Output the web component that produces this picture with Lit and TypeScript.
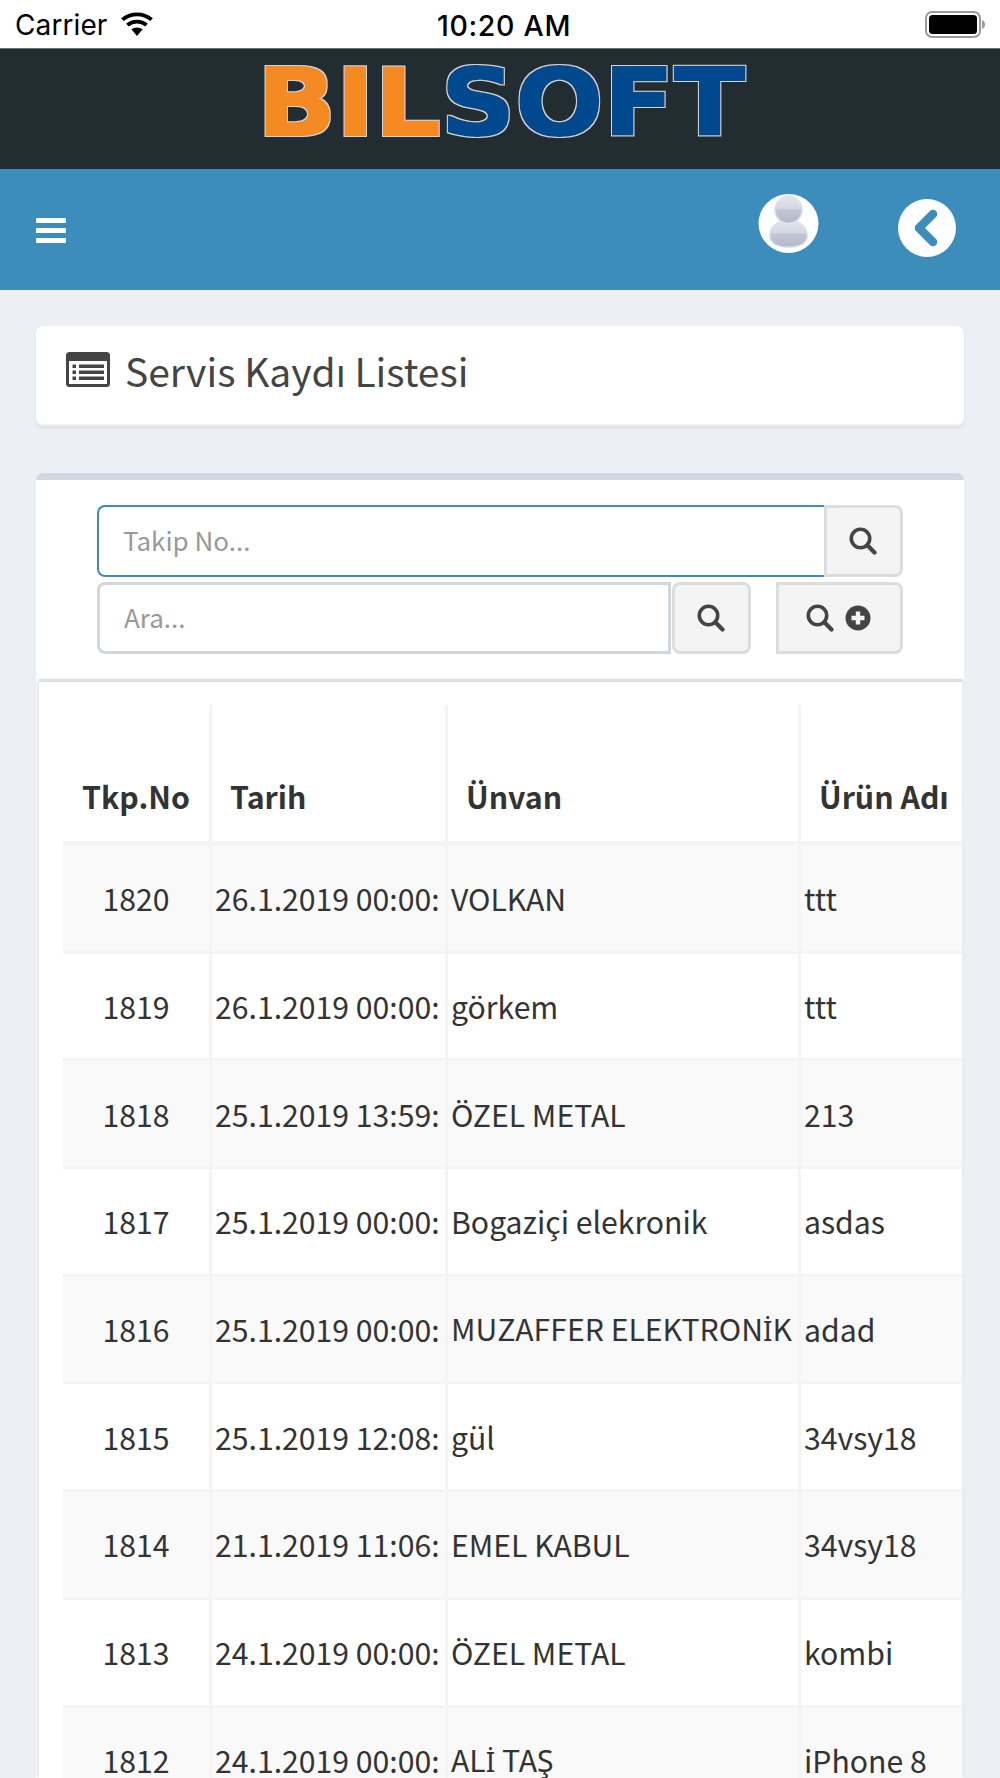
import { LitElement, html, css, svg } from "lit";
import { customElement } from "lit/decorators.js";

const dotI = html`<span class="idot">\u0130</span>`;

const rows: [string, string, unknown, string][] = [
  ["1820", "26.1.2019 00:00:", "VOLKAN", "ttt"],
  ["1819", "26.1.2019 00:00:", "görkem", "ttt"],
  ["1818", "25.1.2019 13:59:", "ÖZEL METAL", "213"],
  ["1817", "25.1.2019 00:00:", "Bogaziçi elekronik", "asdas"],
  ["1816", "25.1.2019 00:00:", html`MUZAFFER ELEKTRON${dotI}K`, "adad"],
  ["1815", "25.1.2019 12:08:", "gül", "34vsy18"],
  ["1814", "21.1.2019 11:06:", "EMEL KABUL", "34vsy18"],
  ["1813", "24.1.2019 00:00:", "ÖZEL METAL", "kombi"],
  ["1812", "24.1.2019 00:00:", html`AL${dotI} TAŞ`, "iPhone 8"],
];

const searchIcon = svg`<svg class="sr" width="28" height="28" viewBox="0 0 28 28" fill="none" stroke="#444"><circle cx="11.5" cy="11.5" r="9.2" stroke-width="3.6"/><path d="M18.6 18.6 L25.5 25.5" stroke-width="4.2" stroke-linecap="round"/></svg>`;

@customElement("app-root")
export class AppRoot extends LitElement {
  static styles = css`
    :host {
      display: block;
      width: 1000px;
      height: 1778px;
      overflow: hidden;
      background: #ecf0f5;
      font-family: "Noto Sans CJK JP", "Noto Sans", sans-serif;
      color: #333;
    }
    * { box-sizing: border-box; }
    .idot { font-family: "Noto Sans", sans-serif; font-size: 0.92em; }
    .status {
      height: 49px;
      background: #fff;
      border-bottom: 1px solid #6b7276;
      display: grid;
      grid-template-columns: 1fr auto 1fr;
      align-items: center;
      padding: 2px 15px 0 15px;
      font-family: Inter, "Liberation Sans", sans-serif;
      color: #000;
    }
    .st-left { display: flex; align-items: center; gap: 13px; font-size: 28px; letter-spacing: 0.1px; }
    .st-left svg { margin-top: -3px; }
    .st-right svg { margin-top: -2px; }
    .st-time { font-size: 28.5px; font-weight: 500; letter-spacing: 0.7px; padding-left: 8px; }
    .st-right { display: flex; justify-content: flex-end; }
    .logo-bar {
      height: 120px;
      background: #222d32;
      display: flex;
      justify-content: center;
    }
    .logo { display: block; margin-top: 8px; margin-left: 8px; overflow: visible; }
    .logo text {
      font-family: "DejaVu Sans", sans-serif;
      font-weight: 700;
      font-size: 93px;
    }
    .nav {
      height: 121px;
      background: #3c8dbc;
      display: flex;
      align-items: center;
      padding: 0 44px 0 36px;
    }
    .burger { width: 30px; display: flex; flex-direction: column; gap: 5px; margin-top: 1px; }
    .burger span { height: 5px; background: #fff; border-radius: 1px; }
    .spacer { flex: 1; }
    .avatar { width: 61px; height: 61px; margin-right: 79px; margin-top: -12px; display: block; }
    .back { width: 58px; height: 58px; display: block; margin-top: -3px; }
    .content { padding: 36px 36px 0; }
    .title-card {
      height: 100px;
      background: #fff;
      border-radius: 7px;
      border-bottom: 2px solid #f0f0f0;
      box-shadow: 0 2px 3px rgba(0, 0, 0, 0.08);
      display: flex;
      align-items: flex-start;
      padding: 21px 0 0 30px;
      gap: 15px;
      margin-bottom: 47px;
    }
    .title-card svg { margin-top: 5px; }
    .title {
      font-size: 39px;
      line-height: 46px;
      font-weight: 400;
      color: #444;
    }
    .box {
      background: #fff;
      border-top: 7px solid #d2d6de;
      border-radius: 7px 7px 0 0;
      padding-top: 25px;
    }
    .search { padding: 0 61px 25px; display: flex; flex-direction: column; gap: 5px; }
    .line { display: flex; height: 72px; }
    .input {
      flex: 1;
      min-width: 0;
      height: 72px;
      padding: 0 24px 3px;
      font: 400 26px "Noto Sans CJK JP", "Noto Sans", sans-serif;
      background: #fff;
      outline: none;
      border: 3px solid #d2d6de;
      border-radius: 8px 0 0 8px;
    }
    .input::placeholder { color: #999; opacity: 1; }
    .input.focus { border-color: #3c8dbc; border-width: 2.5px; border-right: 0; }
    .btn {
      height: 72px;
      width: 79px;
      background: #f4f4f4;
      border: 3px solid #ddd;
      border-radius: 0 8px 8px 0;
      display: flex;
      align-items: center;
      justify-content: center;
      gap: 11px;
      padding: 0 2px 0 0;
    }
    .btn.round { width: 79px; margin-left: 1px; border-radius: 8px; }
    .btn.wide { width: 127px; margin-left: 25px; border-radius: 0 8px 8px 0; }
    .wrap {
      margin: 0 2px 0 3px;
      padding: 23px 0 0 24px;
      background: #fff;
      border-top: 3px solid #dfe0e2;
      box-shadow: -3px 0 3px -1px #e3e6ea, 3px 0 3px -1px #e3e6ea;
      overflow: hidden;
      height: 1100px;
    }
    table { border-collapse: separate; border-spacing: 0; table-layout: fixed; width: 1040px; }
    th {
      height: 141px;
      padding: 0 0 23px;
      font-size: 30.3px;
      font-weight: 700;
      color: #333;
      text-align: left;
      vertical-align: bottom;
      line-height: 44px;
      border-right: 3px solid #f4f4f4;
      border-bottom: 5px solid #f4f4f4;
    }
    th.c { text-align: center; }
    th.t { padding-left: 18px; }
    td {
      height: 107.7px;
      padding: 0 3px;
      font-size: 30.2px;
      line-height: 44px;
      color: #333;
      white-space: nowrap;
      border-right: 3px solid #f4f4f4;
      border-bottom: 3px solid #f4f4f4;
    }
    td.c { text-align: center; }
    tr.odd td { background: #f9f9f9; }
  `;

  render() {
    return html`
      <div class="status">
        <div class="st-left">
          <span>Carrier</span>
          <svg width="34" height="25" viewBox="0 0 30 24" preserveAspectRatio="none">
            <path d="M15 24 L10 17.5 A8 8 0 0 1 20 17.5 Z" fill="#000"/>
            <path d="M6.6 13.5 A12.5 12.5 0 0 1 23.4 13.5" fill="none" stroke="#000" stroke-width="3.6"/>
            <path d="M2.2 8.3 A19 19 0 0 1 27.8 8.3" fill="none" stroke="#000" stroke-width="3.6"/>
          </svg>
        </div>
        <div class="st-time">10:20 AM</div>
        <div class="st-right">
          <svg width="60" height="27" viewBox="0 0 60 27">
            <rect x="1" y="1" width="54" height="25" rx="6" fill="none" stroke="#9a9a9a" stroke-width="2"/>
            <rect x="4" y="4" width="48" height="19" rx="3.5" fill="#000"/>
            <path d="M57 9 C59 10 60 11.5 60 13.5 C60 15.5 59 17 57 18 Z" fill="#9a9a9a"/>
          </svg>
        </div>
      </div>
      <div class="logo-bar">
        <svg class="logo" width="500" height="88" viewBox="0 0 500 88">
          <defs>
            <filter id="lg" x="-5%" y="-20%" width="110%" height="140%">
              <feMorphology in="SourceGraphic" operator="dilate" radius="1.4 0.6" result="fat"/>
              <feMorphology in="SourceAlpha" operator="dilate" radius="2.4 1.6" result="edge"/>
              <feFlood flood-color="#d4d4d4" result="c"/>
              <feComposite in="c" in2="edge" operator="in" result="outline"/>
              <feMerge><feMergeNode in="outline"/><feMergeNode in="fat"/></feMerge>
            </filter>
          </defs>
          <text x="3" y="78" textLength="488" lengthAdjust="spacingAndGlyphs" filter="url(#lg)"><tspan fill="#f68a20">BIL</tspan><tspan fill="#03498e">SOFT</tspan></text>
        </svg>
      </div>
      <div class="nav">
        <div class="burger"><span></span><span></span><span></span></div>
        <div class="spacer"></div>
        <svg class="avatar" viewBox="0 0 62 60">
          <defs>
            <linearGradient id="ag" x1="0" y1="0" x2="0" y2="1">
              <stop offset="0" stop-color="#e4e5ee"/>
              <stop offset="0.45" stop-color="#d6d8e3"/>
              <stop offset="0.5" stop-color="#c3c6d6"/>
              <stop offset="1" stop-color="#b4b8c9"/>
            </linearGradient>
          </defs>
          <ellipse cx="31" cy="30" rx="30.5" ry="30" fill="#fff"/>
          <path d="M12 43 C12 33 20 27 31 27 C42 27 50 33 50 43 C50 50 42 54 31 54 C20 54 12 50 12 43 Z" fill="url(#ag)" stroke="#dcdee7" stroke-width="1.5"/>
          <circle cx="31" cy="16" r="14" fill="url(#ag)" stroke="#e4e5ee" stroke-width="1.5"/>
        </svg>
        <svg class="back" viewBox="0 0 58 58">
          <circle cx="29" cy="29" r="29" fill="#fff"/>
          <path d="M35 15 L21 29 L35 43" fill="none" stroke="#3c8dbc" stroke-width="8.5" stroke-linejoin="round" stroke-linecap="round"/>
        </svg>
      </div>
      <div class="content">
        <div class="title-card">
          <svg width="44" height="35" viewBox="0 0 44 35">
            <rect width="44" height="35" rx="3.5" fill="#444"/>
            <rect x="3" y="9" width="38" height="23" rx="0.5" fill="#fff"/>
            <rect x="6.5" y="12.5" width="3.5" height="3.5" fill="#444"/>
            <rect x="6.5" y="18.5" width="3.5" height="3.5" fill="#444"/>
            <rect x="6.5" y="24.5" width="3.5" height="3.5" fill="#444"/>
            <rect x="13" y="12.5" width="25" height="3.5" fill="#444"/>
            <rect x="13" y="18.5" width="25" height="3.5" fill="#444"/>
            <rect x="13" y="24.5" width="25" height="3.5" fill="#444"/>
          </svg>
          <div class="title">Servis Kaydı Listesi</div>
        </div>
        <div class="box">
          <div class="search">
            <div class="line">
              <input class="input focus" placeholder="Takip No..." />
              <button class="btn">${searchIcon}</button>
            </div>
            <div class="line">
              <input class="input" placeholder="Ara..." />
              <button class="btn round">${searchIcon}</button>
              <button class="btn wide">
                ${searchIcon}
                <svg width="26" height="26" viewBox="0 0 26 26">
                  <circle cx="13" cy="13" r="12.5" fill="#444"/>
                  <path d="M13 6.5 V19.5 M6.5 13 H19.5" stroke="#f4f4f4" stroke-width="4.4"/>
                </svg>
              </button>
            </div>
          </div>
          <div class="wrap">
            <table>
              <colgroup>
                <col style="width:149px" /><col style="width:236px" /><col style="width:353px" /><col style="width:302px" />
              </colgroup>
              <thead>
                <tr>
                  <th class="c">Tkp.No</th>
                  <th class="t">Tarih</th>
                  <th class="t">Ünvan</th>
                  <th class="t">Ürün Adı</th>
                </tr>
              </thead>
              <tbody>
                ${rows.map(
                  (r, i) => html`<tr class=${i % 2 === 0 ? "odd" : ""}>
                    <td class="c">${r[0]}</td>
                    <td>${r[1]}</td>
                    <td>${r[2]}</td>
                    <td>${r[3]}</td>
                  </tr>`
                )}
              </tbody>
            </table>
          </div>
        </div>
      </div>
    `;
  }
}
